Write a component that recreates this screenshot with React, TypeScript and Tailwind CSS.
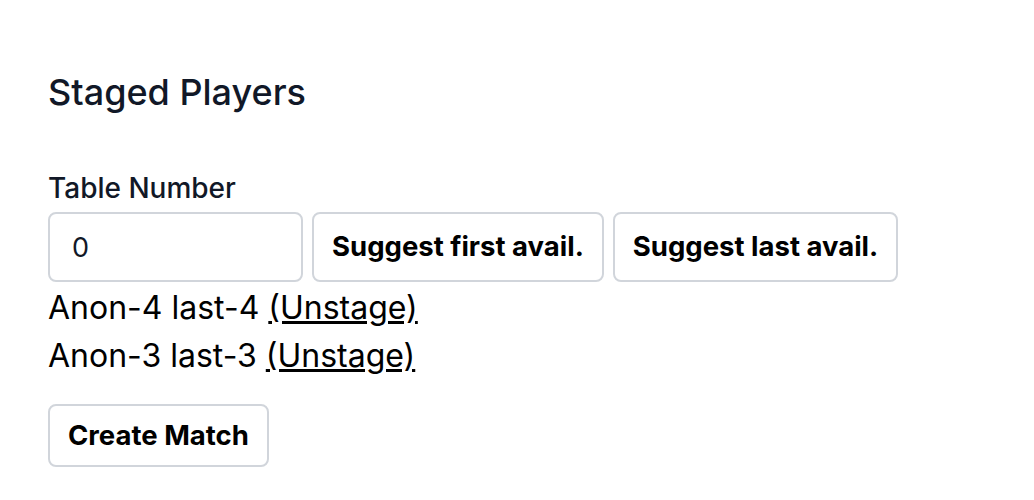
export default function App() {
  const staged = [
    { id: 4, name: "Anon-4 last-4" },
    { id: 3, name: "Anon-3 last-3" },
  ];
  return (
    <div className="min-h-screen bg-white px-12 pt-[72px] text-black" style={{ fontFamily: "Inter, 'Noto Sans', sans-serif" }}>
      <h2 className="text-[36px] leading-[40px] font-medium text-[#111827]">Staged Players</h2>
      <label className="mt-[58px] block text-[28px] leading-[36px] font-medium text-[#111827]">Table Number</label>
      <div className="mt-[6px] flex gap-[9px]">
        <input
          type="text"
          defaultValue="0"
          className="h-[70px] w-[255px] rounded-lg border-2 border-[#d1d5db] px-[22px] text-[27px] text-[#111827] outline-none"
        />
        <button className="h-[70px] rounded-lg border-2 border-[#d1d5db] bg-white px-[18px] text-[27.5px] font-bold">
          Suggest first avail.
        </button>
        <button className="h-[70px] rounded-lg border-2 border-[#d1d5db] bg-white px-[18px] text-[27.5px] font-bold">
          Suggest last avail.
        </button>
      </div>
      <div className="mt-[2px]">
        {staged.map(p => (
          <div key={p.id} className="text-[32px] leading-[48px]">
            {p.name} <a href="#" className="underline">(Unstage)</a>
          </div>
        ))}
      </div>
      <button className="mt-[24px] h-[63px] rounded-lg border-2 border-[#d1d5db] bg-white px-[18px] text-[27.5px] font-bold">
        Create Match
      </button>
    </div>
  );
}
